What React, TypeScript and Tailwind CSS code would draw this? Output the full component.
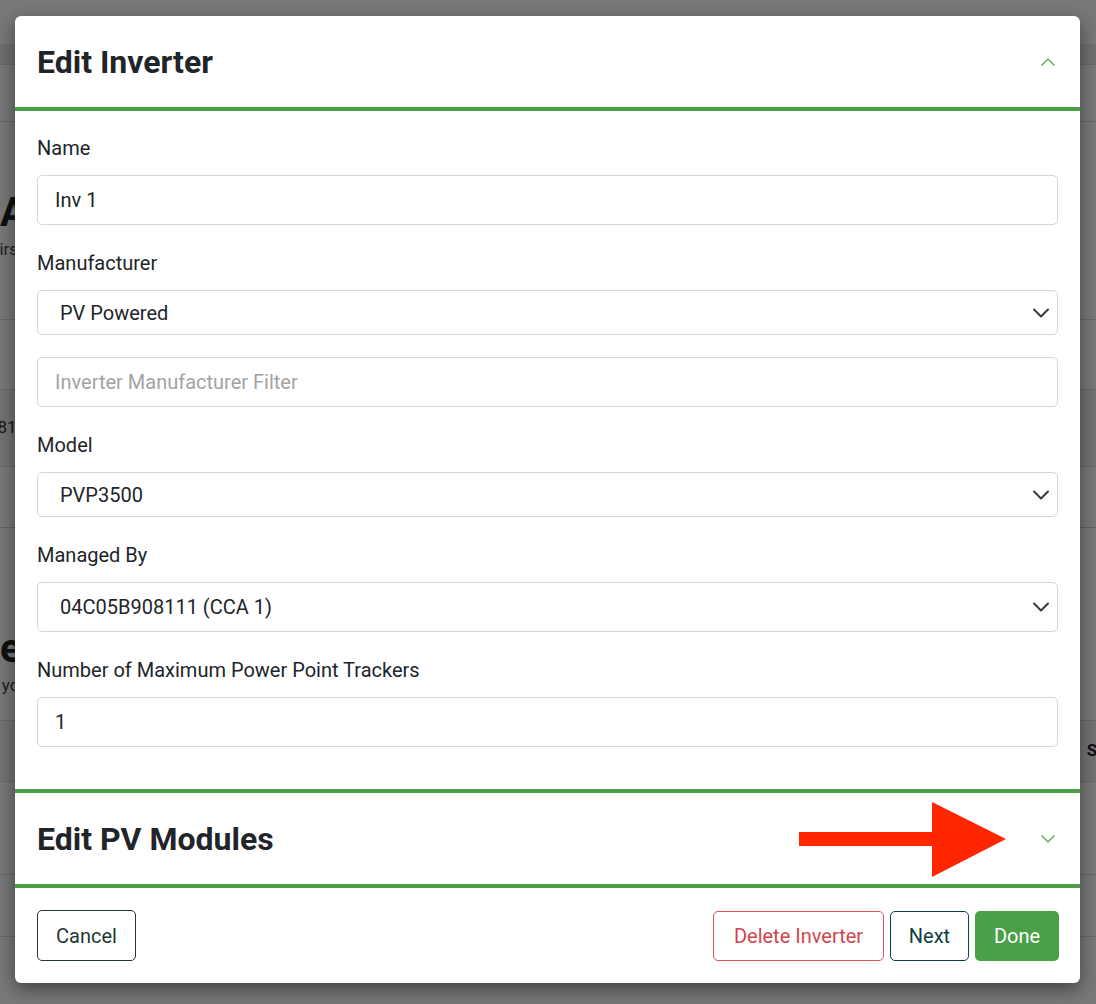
import { ReactNode } from "react";

const GREEN = "#49a047";

function Chevron({ up = false }: { up?: boolean }) {
  return (
    <svg width="16" height="10" viewBox="0 0 16 10" fill="none" className="shrink-0">
      <path
        d={up ? "M1.5 8.5 8 2l6.5 6.5" : "M1.5 1.5 8 8l6.5-6.5"}
        stroke={GREEN}
        strokeWidth="1.2"
      />
    </svg>
  );
}

function SelectArrow() {
  return (
    <svg width="18" height="12" viewBox="0 0 18 12" fill="none" className="shrink-0">
      <path d="M2 2.5 9 9.5l7-7" stroke="#343a40" strokeWidth="2" strokeLinecap="round" strokeLinejoin="round" />
    </svg>
  );
}

function Field({ label, children, last = false }: { label: string; children: ReactNode; last?: boolean }) {
  return (
    <div className={`flex flex-col ${last ? "mb-[22px]" : "mb-[23px]"}`}>
      <label className="mb-[12px] text-[20px] leading-[30px] text-[#212529]">{label}</label>
      {children}
    </div>
  );
}

function TextInput({ value, placeholder }: { value?: string; placeholder?: string }) {
  return (
    <div className="flex h-[50px] items-center rounded-[5px] border border-[#d6d6d6] bg-white pl-[17px] text-[20px]">
      {value ? (
        <span className="text-[#212529]">{value}</span>
      ) : (
        <span className="text-[#a3a3a3]">{placeholder}</span>
      )}
    </div>
  );
}

function Select({ value, tall = false }: { value: string; tall?: boolean }) {
  return (
    <div
      className={`flex items-center justify-between rounded-[5px] border border-[#d6d6d6] bg-white pl-[22px] pr-[7px] text-[20px] text-[#212529] ${
        tall ? "h-[50px]" : "h-[45px]"
      }`}
    >
      <span>{value}</span>
      <SelectArrow />
    </div>
  );
}

// dimmed page behind the modal; only its edges show
function BackgroundPage() {
  return (
    <div className="flex flex-col text-[#222]">
      <div className="h-[44px]" />
      <div className="h-[21px] border-b border-[#dcdcdc] bg-[#ececec]" />
      <div className="h-[57px] border-b border-[#dcdcdc]" />
      <div className="flex h-[198px] flex-col justify-center border-b border-[#dcdcdc] pt-[10px]">
        <div className="text-[40px] font-bold leading-[48px]">Arrays</div>
        <div className="-ml-[10px] text-[17px] text-[#444]">First add your arrays</div>
      </div>
      <div className="h-[70px] border-b border-[#dcdcdc]" />
      <div className="flex h-[77px] items-center border-b border-[#dcdcdc] bg-[#f2f2f2] text-[17px] text-[#333]">
        <span className="-ml-[12px]">0810 Array</span>
      </div>
      <div className="h-[61px] border-b border-[#d0d0d0]" />
      <div className="flex h-[192px] flex-col justify-end pb-[22px]">
        <div className="text-[40px] font-bold leading-[48px]">eGauge</div>
        <div className="-ml-[8px] text-[17px] text-[#444]">t your devices</div>
      </div>
      <div className="flex h-[62px] items-center justify-end border-y border-[#dcdcdc] bg-[#f2f2f2]">
        <span className="-mr-[40px] text-[17px] font-bold">Status</span>
      </div>
      <div className="h-[93px] border-b border-[#dcdcdc]" />
      <div className="h-[62px] border-b border-[#dcdcdc]" />
      <div className="h-[67px]" />
    </div>
  );
}

export default function App() {
  return (
    <div className="relative h-[1004px] overflow-hidden bg-white font-['Roboto','Liberation_Sans',sans-serif]">
      <BackgroundPage />
      <div className="absolute inset-0 bg-black/[0.53]" />

      <div className="absolute left-[15px] top-[16px] w-[1065px] rounded-[6px] bg-white shadow-[0_6px_18px_rgba(0,0,0,0.45)]">
        {/* Inverter header */}
        <div className="flex h-[95px] items-center justify-between border-b-[4px] border-[#49a047] pl-[22px] pr-[24px]">
          <h2 className="text-[32px] font-bold text-[#212529]">Edit Inverter</h2>
          <Chevron up />
        </div>

        {/* Inverter form */}
        <div className="px-[22px] pt-[22px] pb-[20px]">
          <Field label="Name">
            <TextInput value="Inv 1" />
          </Field>
          <div className="mb-[23px] flex flex-col">
            <label className="mb-[12px] text-[20px] leading-[30px] text-[#212529]">Manufacturer</label>
            <Select value="PV Powered" />
            <div className="mt-[22px]">
              <TextInput placeholder="Inverter Manufacturer Filter" />
            </div>
          </div>
          <Field label="Model">
            <Select value="PVP3500" />
          </Field>
          <Field label="Managed By">
            <Select value="04C05B908111 (CCA 1)" tall />
          </Field>
          <Field label="Number of Maximum Power Point Trackers" last>
            <TextInput value="1" />
          </Field>
        </div>

        {/* PV modules header */}
        <div className="relative flex h-[99px] items-center justify-between border-y-[4px] border-[#49a047] pl-[22px] pr-[24px]">
          <h2 className="text-[32px] font-bold text-[#212529]">Edit PV Modules</h2>
          <Chevron />
          <svg
            className="absolute left-[784px] top-[9px]"
            width="207"
            height="75"
            viewBox="0 0 207 75"
          >
            <rect x="0" y="30" width="134" height="14" fill="#ff2600" />
            <polygon points="133,0 207,37 133,75" fill="#ff2600" />
          </svg>
        </div>

        {/* Footer */}
        <div className="flex items-center justify-between pl-[22px] pr-[21px] pt-[22px] pb-[22px]">
          <button className="h-[51px] w-[99px] rounded-[5px] border border-[#1d3a2e] text-[20px] text-[#1d3a2e]">
            Cancel
          </button>
          <div className="flex gap-[6px]">
            <button className="h-[50px] w-[171px] rounded-[5px] border border-[#d9534f] text-[20px] text-[#d0454c]">
              Delete Inverter
            </button>
            <button className="h-[50px] w-[79px] rounded-[5px] border border-[#0e3e48] text-[20px] text-[#0e3e48]">
              Next
            </button>
            <button className="h-[50px] w-[84px] rounded-[5px] bg-[#49a047] text-[20px] text-white">
              Done
            </button>
          </div>
        </div>
      </div>
    </div>
  );
}
